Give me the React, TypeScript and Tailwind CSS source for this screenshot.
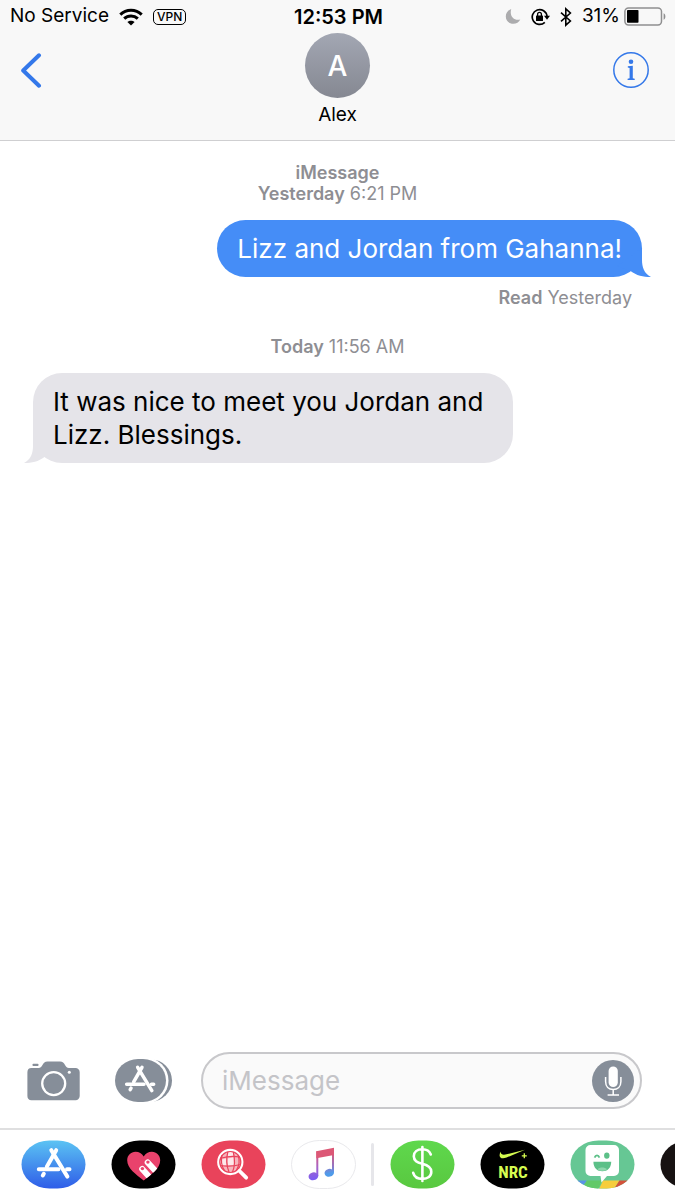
import type { ReactNode } from "react";

const WifiIcon = () => (
  <svg width="24" height="18" viewBox="0 0 24 18" fill="none" stroke="#000" strokeWidth="3">
    <path d="M1.3 6.6C7.2 .9 16.8 .9 22.7 6.6" />
    <path d="M5.2 10.7C9 7.1 15 7.1 18.8 10.7" />
    <path d="M12 17.5 8.4 14C10.4 12.2 13.6 12.2 15.6 14Z" fill="#000" stroke="none" />
  </svg>
);

const MoonIcon = () => (
  <svg width="16" height="17" viewBox="0 0 16 17">
    <path d="M6.2 1C2.8 2.3 .8 5.2 .8 8.4c0 4.200 3.300 7.400 7.500 7.400 3.100 0 5.700-1.700 7-4.400-5.600 1.700-11.200-2.600-9.100-10.400z" fill="#acacae" />
  </svg>
);

const RotationLockIcon = () => (
  <svg width="19" height="18" viewBox="0 0 19 18">
    <path d="M13.800 14.300A7.400 7.400 0 1 1 16 8.200" fill="none" stroke="#000" strokeWidth="1.700" />
    <path d="M13 7.800h6l-3 3.900z" />
    <rect x="5" y="7.600" width="7" height="5.400" rx=".6" />
    <path d="M6.600 8V6.200a1.900 1.900 0 0 1 3.800 0V8" fill="none" stroke="#000" strokeWidth="1.300" />
  </svg>
);

const BluetoothIcon = () => (
  <svg width="12" height="20" viewBox="0 0 12 20" fill="none" stroke="#000" strokeWidth="1.600">
    <path d="M1 5.600 10.400 14 5.800 18.200V1.800L10.400 6 1 14.400" />
  </svg>
);

const BatteryIcon = () => (
  <svg width="43" height="19" viewBox="0 0 43 19">
    <rect x=".9" y=".9" width="36.600" height="17" rx="3.600" fill="none" stroke="#8f8f90" strokeWidth="1.500" />
    <rect x="3" y="3" width="11.500" height="12.800" rx=".8" />
    <path d="M39.600 6.200c2.400 1.200 2.400 5.400 0 6.600z" fill="#8f8f90" />
  </svg>
);

const InfoIcon = () => (
  <svg width="36" height="36" viewBox="0 0 36 36" fill="#3478e9">
    <circle cx="18" cy="18" r="17.200" fill="none" stroke="#3478e9" strokeWidth="1.500" />
    <circle cx="18" cy="9.700" r="2.300" />
    <path d="M14.800 14.300 19.800 13.800V26.200L21.700 26.800V28H14.600V26.800L16.600 26.200V15.900L14.800 15.500Z" />
  </svg>
);

const AppStoreGlyph = () => (
  <g fill="none" stroke="#fff" strokeWidth="4" strokeLinecap="round">
    <path d="M35.200 10.200 25.800 26.800M22.800 33.800 21.800 35.500" />
    <path d="M30.300 10.200 46.400 36.600" />
    <path d="M17.800 29.300H37.500M46 29.300H48.500" />
  </g>
);

const CameraIcon = () => (
  <svg width="53" height="40" viewBox="0 0 53 40">
    <path d="M4.500 7H11.500C16 7 15 .6 20.500 .6H33C38.500 .6 37.500 7 42 7H48.500A4.200 4.200 0 0 1 52.700 11.200V35A4.200 4.200 0 0 1 48.500 39.200H4.500A4.200 4.200 0 0 1 .4 35V11.200A4.200 4.200 0 0 1 4.500 7Z" fill="#868e99" />
    <rect x="5.500" y="2.800" width="6" height="2.200" rx=".8" fill="#868e99" />
    <circle cx="26.700" cy="22.600" r="11.500" fill="none" stroke="#fff" strokeWidth="2.300" />
    <circle cx="42.300" cy="11.200" r="1.500" fill="#fff" />
  </svg>
);

const AppsIcon = () => (
  <svg width="58" height="43" viewBox="0 0 58 43">
    <rect x="12" y=".5" width="45" height="42" rx="21" fill="#868e99" />
    <rect x="4" y="-1.500" width="49.500" height="46" rx="23" fill="#fff" />
    <rect x="0" y="0" width="51" height="43" rx="23" ry="21.500" fill="#868e99" />
    <g transform="translate(-4 -.6) scale(.88)">
      <AppStoreGlyph />
    </g>
  </svg>
);

const MicIcon = () => (
  <svg width="42" height="42" viewBox="0 0 42 42">
    <circle cx="21" cy="21" r="21" fill="#868e99" />
    <rect x="16.600" y="6.500" width="9.200" height="20.500" rx="4.600" fill="#fff" />
    <path d="M13.600 17V21.500C13.600 26.500 16.700 29.500 21.200 29.500S28.900 26.500 28.900 21.500V17M21.200 29.500V35M15.600 35H27" fill="none" stroke="#fff" strokeWidth="1.500" />
  </svg>
);

const Pill = ({ fill, stroke, children }: { fill: string; stroke?: string; children?: ReactNode }) => (
  <svg width="65" height="49" viewBox="0 0 65 49" className="block">
    <rect x=".5" y=".5" width="64" height="48" rx="28" ry="24" fill={fill} stroke={stroke} />
    {children}
  </svg>
);

const AppStorePill = () => (
  <Pill fill="url(#store)">
    <defs>
      <linearGradient id="store" x1="0" y1="0" x2="0" y2="1">
        <stop offset="0" stopColor="#5bc3f3" />
        <stop offset="1" stopColor="#2f5de8" />
      </linearGradient>
    </defs>
    <AppStoreGlyph />
  </Pill>
);

const HEART = "M32.700 40.500C25 34.500 16.200 28.500 16.200 20.300 16.200 15.200 19.900 11.700 24.500 11.700 28 11.700 31 13.500 32.700 16.500 34.400 13.500 37.400 11.700 40.900 11.700 45.500 11.700 49.200 15.200 49.200 20.300 49.200 28.500 40.400 34.500 32.700 40.500Z";

const DigitalTouchPill = () => (
  <Pill fill="#000">
    <clipPath id="heart">
      <path d={HEART} />
    </clipPath>
    <path d={HEART} fill="#e9426c" />
    <g clipPath="url(#heart)" strokeLinecap="round">
      <path d="M31.200 29 42 41M36.700 22.500 50 37" stroke="#fff" strokeWidth="6" />
      <circle cx="31.400" cy="28.600" r="1.700" fill="#e9426c" />
      <circle cx="36.900" cy="22.100" r="1.700" fill="#e9426c" />
    </g>
  </Pill>
);

const ImagesPill = () => (
  <Pill fill="#e9435b">
    <circle cx="29.300" cy="22" r="12" fill="#f7b5bd" stroke="#fff" strokeWidth="2.300" />
    <path d="M26.500 18.500 32.500 17.500 33 25 27 25.500ZM19 20 25 18.500 25.500 25 20 25ZM27 12 32 12 32.500 16 27 17Z" fill="#fff" opacity=".7" />
    <g fill="none" stroke="#e9435b" strokeWidth="1.200">
      <circle cx="29.300" cy="22" r="10.500" />
      <path d="M26.800 12C25 19 25.500 26 28 32M32.300 12C34 19 34 26 31.500 32M21 15C19.800 20 20.500 26 23.500 30.500M37 15C38.800 20 38 26 35.500 30" />
      <path d="M20.500 18C26 16.500 33 16 38.500 17M19 25.500C26 26.500 33 26.300 39.500 24.500" />
    </g>
    <path d="M38.500 31 45.200 37.700" stroke="#fff" strokeWidth="3.800" strokeLinecap="round" />
  </Pill>
);

const MusicPill = () => (
  <Pill fill="#fff" stroke="#e9e9ec">
    <defs>
      <linearGradient id="noteLeft" x1="0" y1="8" x2="0" y2="40" gradientUnits="userSpaceOnUse">
        <stop offset=".15" stopColor="#df5775" />
        <stop offset=".6" stopColor="#a564c8" />
        <stop offset="1" stopColor="#7a5cf5" />
      </linearGradient>
      <linearGradient id="noteRight" x1="0" y1="8" x2="0" y2="38" gradientUnits="userSpaceOnUse">
        <stop offset=".15" stopColor="#df5775" />
        <stop offset=".6" stopColor="#9274c4" />
        <stop offset=".85" stopColor="#4f9bea" />
      </linearGradient>
    </defs>
    <g fill="url(#noteLeft)">
      <path d="M25.300 11.300H27.300V36H25.300Z" />
      <ellipse cx="22.400" cy="36.300" rx="4.900" ry="3.900" transform="rotate(-12 22.400 36.300)" />
    </g>
    <g fill="url(#noteRight)">
      <path d="M41 8.500H43V32H41Z" />
      <ellipse cx="38.300" cy="32.800" rx="4.800" ry="3.900" transform="rotate(-12 38.300 32.800)" />
    </g>
    <path d="M25.300 11.300 43 7.700V15L25.300 18.300Z" fill="#dc5876" />
  </Pill>
);

const CashPill = () => (
  <Pill fill="url(#cash)">
    <defs>
      <linearGradient id="cash" x1="0" y1="0" x2="0" y2="1">
        <stop offset="0" stopColor="#5fd84d" />
        <stop offset="1" stopColor="#59c840" />
      </linearGradient>
    </defs>
    <path
      d="M32.400 7V41M40.800 14.500C39.500 11 36.500 9.300 32.400 9.300 27 9.300 23.800 12.200 23.800 16.300 23.800 20.800 27 22.300 32.400 23.800 38 25.300 41.300 27.200 41.300 31.800 41.300 36.300 37.800 38.900 32.400 38.900 27.600 38.900 24.300 36.700 23.200 32.800"
      fill="none"
      stroke="#fff"
      strokeWidth="2.600"
      strokeLinecap="round"
    />
  </Pill>
);

const NrcPill = () => (
  <Pill fill="#000">
    <path d="M20.800 11.500C17.800 16.500 20.500 20 26.500 17.600L45 9.700 26.500 14.300C22.600 15.300 20.500 14.200 20.800 11.500Z" fill="#d6fc51" />
    <path d="M44.300 13.300V18.300M41.800 15.800H46.800" stroke="#d6fc51" strokeWidth="1.300" />
    <text x="33" y="38" textAnchor="middle" fontSize="17" fontWeight="700" fill="#d6fc51" fontFamily="'Liberation Sans Narrow', 'Roboto Condensed', Roboto, sans-serif">
      NRC
    </text>
  </Pill>
);

const BitmojiPill = () => (
  <Pill fill="#66c794">
    <clipPath id="bitmoji">
      <rect x=".5" y=".5" width="64" height="48" rx="28" ry="24" />
    </clipPath>
    <g clipPath="url(#bitmoji)">
      <path d="M6 40.500H17L11 49H4Z" fill="#5a93e6" />
      <path d="M17 40.500H32L28 49H11Z" fill="#62c968" />
      <path d="M33 40.500H49.500L44 49H29Z" fill="#f6cd3c" />
      <path d="M49.500 40.500H60L52 49H44Z" fill="#d4513b" />
    </g>
    <path d="M20.500 5H44A5 5 0 0 1 49 10V31A5 5 0 0 1 44 36H37L31.500 42.500 30.500 36H20.500A5 5 0 0 1 15.500 31V10A5 5 0 0 1 20.500 5Z" fill="#fff" />
    <path d="M24.600 17.600C25.600 14.700 28.400 14.700 29.400 17.600" fill="none" stroke="#5cc088" strokeWidth="1.800" />
    <ellipse cx="36.800" cy="15.600" rx="2.700" ry="3.200" fill="#5cc088" />
    <path d="M23.400 21.800H41.200C41.200 28 37.500 31.300 32.300 31.300S23.400 28 23.400 21.800Z" fill="#5cc088" />
    <path d="M27.500 29.300C29.500 26.800 35 26.800 37 29.300 34.500 31.300 30 31.300 27.500 29.300Z" fill="#8ed6ac" />
  </Pill>
);

const apps = [
  { name: "App Store", icon: <AppStorePill /> },
  { name: "Digital Touch", icon: <DigitalTouchPill /> },
  { name: "Images", icon: <ImagesPill /> },
  { name: "Music", icon: <MusicPill /> },
];

const moreApps = [
  { name: "Cash", icon: <CashPill /> },
  { name: "Nike Run Club", icon: <NrcPill /> },
  { name: "Bitmoji", icon: <BitmojiPill /> },
  { name: "More", icon: <Pill fill="#171212" /> },
];

const StatusBar = () => (
  <div className="grid h-[33px] grid-cols-[1fr_auto_1fr] items-center pl-[10px] pr-2 text-[19px] text-black">
    <div className="flex items-center gap-[10px]">
      <span>No Service</span>
      <WifiIcon />
      <span className="rounded-[5px] border border-black px-[3px] text-xs leading-[14px] font-medium">VPN</span>
    </div>
    <p className="text-xl font-semibold">12:53 PM</p>
    <div className="flex items-center justify-end">
      <MoonIcon />
      <span className="ml-[10px]"><RotationLockIcon /></span>
      <span className="ml-[10px]"><BluetoothIcon /></span>
      <span className="mr-1 ml-[10px]">31%</span>
      <BatteryIcon />
    </div>
  </div>
);

const Header = () => (
  <header className="border-b border-[#cfcfd1] bg-[#f8f8f8]">
    <StatusBar />
    <div className="grid grid-cols-[1fr_auto_1fr] items-start px-5 pb-[15px]">
      <button type="button" aria-label="Back" className="mt-5 justify-self-start">
        <svg width="22" height="35" viewBox="0 0 22 35" fill="none" stroke="#3478ea" strokeWidth="4" strokeLinecap="round" strokeLinejoin="round">
          <path d="M19 2.300 3.200 17.500 19 32.700" />
        </svg>
      </button>
      <div className="flex flex-col items-center gap-[6px]">
        <div className="flex size-[65px] items-center justify-center rounded-full bg-linear-to-b from-[#a3a7b3] to-[#858892] text-[28px] font-medium text-white">
          A
        </div>
        <h1 className="text-[19px] leading-[21px] text-black">Alex</h1>
      </div>
      <button type="button" aria-label="Details" className="mt-[19px] mr-[6px] justify-self-end">
        <InfoIcon />
      </button>
    </div>
  </header>
);

const Stamp = ({ label, time }: { label: string; time: string }) => (
  <p className="text-center">
    <span className="font-semibold">{label}</span> {time}
  </p>
);

const Bubble = ({ sent, children }: { sent?: boolean; children: ReactNode }) => (
  <div
    className={
      sent
        ? "relative max-w-[480px] self-end rounded-[29px] bg-[#458df7] px-5 py-3 text-[26px] leading-[33px] text-white"
        : "relative max-w-[480px] self-start rounded-[29px] bg-[#e5e4e9] px-5 py-3 text-[26px] leading-[33px] text-black"
    }
  >
    {children}
    <svg
      width="38"
      height="29"
      viewBox="0 0 38 29"
      className={sent ? "absolute -right-[9px] bottom-0 text-[#458df7]" : "absolute bottom-0 -left-[9px] -scale-x-100 text-[#e5e4e9]"}
    >
      <path d="M29 0V12C29 19 31 25.500 38 29 30 29 23.500 27.500 17.500 23L4 18Z" fill="currentColor" />
    </svg>
  </div>
);

export default function App() {
  return (
    <div className="flex min-h-screen flex-col overflow-hidden bg-white font-[Inter,'Liberation_Sans',sans-serif]">
      <Header />

      <main className="flex flex-1 flex-col px-[33px] pt-[21px] text-lg leading-[21px] text-[#8e8e93]">
        <p className="text-center font-semibold">iMessage</p>
        <Stamp label="Yesterday" time="6:21 PM" />
        <div className="mt-4 flex flex-col">
          <Bubble sent>Lizz and Jordan from Gahanna!</Bubble>
          <p className="mt-[10px] mr-[10px] text-right">
            <span className="font-semibold">Read</span> Yesterday
          </p>
        </div>
        <div className="mt-7 flex flex-col gap-4">
          <Stamp label="Today" time="11:56 AM" />
          <Bubble>It was nice to meet you Jordan and Lizz. Blessings.</Bubble>
        </div>
      </main>

      <form className="flex items-center pr-[33px] pb-[19px] pl-[27px]">
        <button type="button" aria-label="Camera" className="shrink-0">
          <CameraIcon />
        </button>
        <button type="button" aria-label="Apps" className="ml-[35px] shrink-0">
          <AppsIcon />
        </button>
        <div className="ml-7 flex h-[57px] min-w-0 flex-1 items-center rounded-full border-2 border-[#c8c8cb] bg-[#fafafa] pr-[6px] pl-[19px]">
          <input
            type="text"
            aria-label="iMessage"
            placeholder="iMessage"
            className="min-w-0 flex-1 bg-transparent text-[26px] leading-[33px] outline-none placeholder:text-[#c4c4c8]"
          />
          <button type="button" aria-label="Record audio" className="shrink-0">
            <MicIcon />
          </button>
        </div>
      </form>

      <nav className="flex items-center overflow-hidden border-t-2 border-[#dfdfe0] pt-[10px] pb-[11px] pl-[21px]">
        <div className="flex shrink-0 gap-[25px]">
          {apps.map((app) => (
            <button key={app.name} type="button" aria-label={app.name}>
              {app.icon}
            </button>
          ))}
        </div>
        <div className="mr-4 ml-[15px] h-[43px] w-[3px] shrink-0 rounded-full bg-[#e6e6ea]" />
        <div className="flex shrink-0 gap-[25px]">
          {moreApps.map((app) => (
            <button key={app.name} type="button" aria-label={app.name}>
              {app.icon}
            </button>
          ))}
        </div>
      </nav>
    </div>
  );
}
